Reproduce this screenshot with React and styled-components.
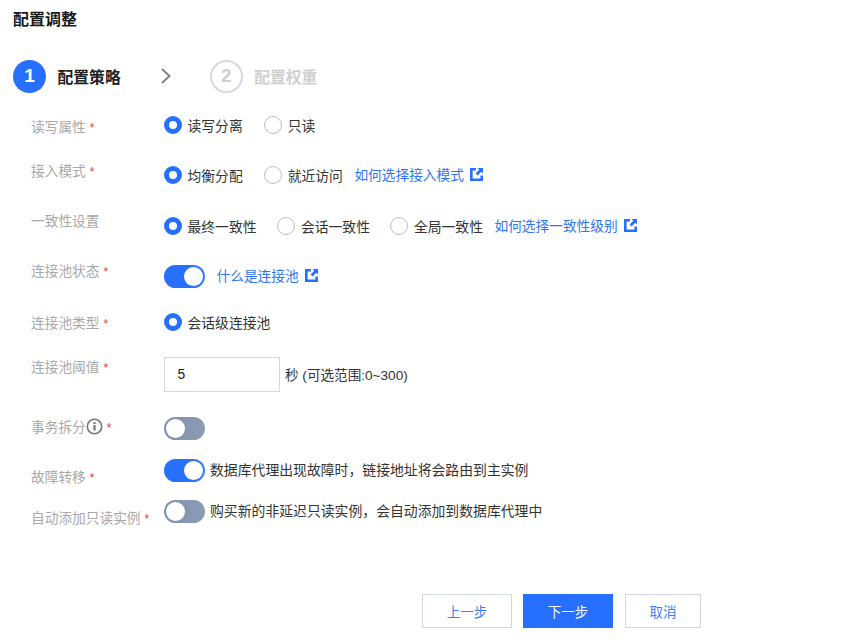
import React from 'react'
import styled, { createGlobalStyle } from 'styled-components'

const GlobalStyle = createGlobalStyle`
  html, body {
    margin: 0;
    padding: 0;
    background: #fff;
    font-family: "Liberation Sans", "Noto Sans CJK SC", sans-serif;
  }
`

const Page = styled.div`
  width: 842px;
  height: 640px;
  overflow: hidden;
  box-sizing: border-box;
  padding: 10px 0 0 13px;
`

const Title = styled.h1`
  margin: 0;
  font-size: 16px;
  line-height: 20px;
  font-weight: 700;
  color: #1a1a1a;
`

const Steps = styled.div`
  display: flex;
  align-items: center;
  height: 34px;
  margin-top: 29px;
`

const StepCircle = styled.span`
  width: 33px;
  height: 33px;
  box-sizing: border-box;
  border-radius: 50%;
  display: flex;
  align-items: center;
  justify-content: center;
  font-size: 19px;
  font-weight: 700;
  background: ${(p) => (p.$active ? '#266fff' : '#fff')};
  color: ${(p) => (p.$active ? '#fff' : '#cfcfcf')};
  border: ${(p) => (p.$active ? 'none' : '2px solid #d3d9e4')};
`

const StepName = styled.span`
  margin-left: 11.5px;
  font-size: 15.8px;
  font-weight: 700;
  color: ${(p) => (p.$active ? '#222' : '#cfcfcf')};
`

const StepArrow = styled.svg`
  width: 14px;
  height: 18px;
  margin: 0 37px 0 38px;
`

const Form = styled.div`
  margin-top: 17px;
  padding-left: 18px;
`

const Row = styled.div`
  display: flex;
  align-items: flex-start;
  height: ${(p) => p.$h}px;
`

const Label = styled.div`
  width: 133px;
  flex: none;
  display: flex;
  align-items: center;
  height: 20px;
  margin-top: -1px;
  padding-top: ${(p) => p.$top}px;
  font-size: 13.7px;
  color: #a8a8a8;
  white-space: nowrap;
`

const Star = styled.span`
  color: #e5383b;
  font-size: 12px;
  margin: 3px 0 0 4px;
`

const Control = styled.div`
  display: flex;
  align-items: center;
  min-height: 24px;
  padding-top: ${(p) => p.$top}px;
`

const RadioItem = styled.label`
  display: flex;
  align-items: center;
  margin-right: ${(p) => p.$gap ?? 11.5}px;
  font-size: 13.8px;
  color: #333;
  white-space: nowrap;
`

const RadioDot = styled.span`
  width: 18px;
  height: 18px;
  box-sizing: border-box;
  border-radius: 50%;
  margin-right: 5.5px;
  background: #fff;
  border: ${(p) => (p.$on ? '5px solid #266fff' : '1px solid #bdbdbd')};
`

const DocLink = styled.a`
  display: flex;
  align-items: center;
  font-size: 13.7px;
  color: #2f75f0;
  white-space: nowrap;
  margin-left: ${(p) => p.$left ?? 0}px;
  margin-bottom: 2px;
`

const LinkIcon = styled.svg`
  width: 13px;
  height: 13px;
  margin-left: 6px;
`

const Switch = styled.span`
  position: relative;
  width: 41px;
  height: 23px;
  flex: none;
  border-radius: 12px;
  background: ${(p) =>
    p.$on
      ? 'linear-gradient(90deg, #266fff 55%, #3b7cf5)'
      : 'linear-gradient(90deg, #7f90ad, #8d9bb5)'};
`

const Knob = styled.span`
  position: absolute;
  top: 2px;
  left: ${(p) => (p.$on ? 20 : 2)}px;
  width: 19px;
  height: 19px;
  border-radius: 50%;
  background: #fff;
`

const SwitchNote = styled.span`
  margin: 0 0 2px 5px;
  font-size: 13.85px;
  color: #333;
  white-space: nowrap;
`

const NumberInput = styled.div`
  width: 116px;
  height: 35px;
  box-sizing: border-box;
  border: 1px solid #d3d8e2;
  padding-left: 12.5px;
  display: flex;
  align-items: center;
  font-size: 13.8px;
  color: #222;
`

const Unit = styled.span`
  margin: 0 0 1px 5px;
  font-size: 13.6px;
  color: #333;
  white-space: nowrap;
`

const InfoIcon = styled.svg`
  width: 17px;
  height: 17px;
`

const Footer = styled.div`
  display: flex;
  margin-top: 59px;
  padding-left: 409px;
`

const Button = styled.button`
  width: ${(p) => p.$w}px;
  height: 34px;
  margin-right: ${(p) => p.$gap ?? 0}px;
  box-sizing: border-box;
  font-family: inherit;
  font-size: 13.5px;
  background: ${(p) => (p.$primary ? '#266fff' : '#fff')};
  color: ${(p) => (p.$primary ? '#fff' : '#3f7ef0')};
  border: 1px solid ${(p) => (p.$primary ? '#266fff' : '#d0d7e2')};
  padding: 0;
`

const External = () => (
  <LinkIcon viewBox="0 0 13 13">
    <path fill="#266fff" d="M0 0h6v2.6H2.6v7.8h7.8V7.5H13V13H0z" />
    <path fill="#266fff" d="M7.5 0H13v5.5l-1.8-1.8L7.6 7.4 5.6 5.4l3.7-3.6z" />
  </LinkIcon>
)

const Info = () => (
  <InfoIcon viewBox="0 0 17 17">
    <circle cx="8.5" cy="8.5" r="7.2" fill="none" stroke="#777" strokeWidth="1.6" />
    <rect x="7.4" y="7" width="2.2" height="5.5" fill="#777" />
    <rect x="7.4" y="4" width="2.2" height="2" fill="#777" />
  </InfoIcon>
)

const Radio = ({ on, gap, children }) => (
  <RadioItem $gap={gap}>
    <RadioDot $on={on} />
    {children}
  </RadioItem>
)

const Toggle = ({ on }) => (
  <Switch $on={on}>
    <Knob $on={on} />
  </Switch>
)

export default function App() {
  return (
    <Page>
      <GlobalStyle />
      <Title>配置调整</Title>

      <Steps>
        <StepCircle $active>1</StepCircle>
        <StepName $active>配置策略</StepName>
        <StepArrow viewBox="0 0 14 18">
          <path d="M3 2l7.5 7L3 16" fill="none" stroke="#808080" strokeWidth="2" />
        </StepArrow>
        <StepCircle>2</StepCircle>
        <StepName>配置权重</StepName>
      </Steps>

      <Form>
        <Row $h={45}>
          <Label $top={7}>读写属性<Star>*</Star></Label>
          <Control $top={3}>
            <Radio on gap={21.5}>读写分离</Radio>
            <Radio>只读</Radio>
          </Control>
        </Row>

        <Row $h={50}>
          <Label $top={6}>接入模式<Star>*</Star></Label>
          <Control $top={8}>
            <Radio on gap={21.5}>均衡分配</Radio>
            <Radio>就近访问</Radio>
            <DocLink>如何选择接入模式<External /></DocLink>
          </Control>
        </Row>

        <Row $h={50}>
          <Label $top={6}>一致性设置</Label>
          <Control $top={9}>
            <Radio on gap={21}>最终一致性</Radio>
            <Radio gap={20.5}>会话一致性</Radio>
            <Radio>全局一致性</Radio>
            <DocLink>如何选择一致性级别<External /></DocLink>
          </Control>
        </Row>

        <Row $h={50}>
          <Label $top={6}>连接池状态<Star>*</Star></Label>
          <Control $top={9}>
            <Toggle on />
            <DocLink $left={11.5}>什么是连接池<External /></DocLink>
          </Control>
        </Row>

        <Row $h={45}>
          <Label $top={8}>连接池类型<Star>*</Star></Label>
          <Control $top={5}>
            <Radio on>会话级连接池</Radio>
          </Control>
        </Row>

        <Row $h={60}>
          <Label $top={7}>连接池阈值<Star>*</Star></Label>
          <Control $top={7}>
            <NumberInput>5</NumberInput>
            <Unit>秒 (可选范围:0~300)</Unit>
          </Control>
        </Row>

        <Row $h={45}>
          <Label $top={7}>事务拆分<Info /><Star>*</Star></Label>
          <Control $top={6}>
            <Toggle />
          </Control>
        </Row>

        <Row $h={40}>
          <Label $top={12}>故障转移<Star>*</Star></Label>
          <Control $top={3}>
            <Toggle on />
            <SwitchNote>数据库代理出现故障时，链接地址将会路由到主实例</SwitchNote>
          </Control>
        </Row>

        <Row $h={40}>
          <Label $top={13}>自动添加只读实例<Star>*</Star></Label>
          <Control $top={4}>
            <Toggle />
            <SwitchNote>购买新的非延迟只读实例，会自动添加到数据库代理中</SwitchNote>
          </Control>
        </Row>
      </Form>

      <Footer>
        <Button $w={90} $gap={11}>上一步</Button>
        <Button $w={90} $gap={12} $primary>下一步</Button>
        <Button $w={76}>取消</Button>
      </Footer>
    </Page>
  )
}
